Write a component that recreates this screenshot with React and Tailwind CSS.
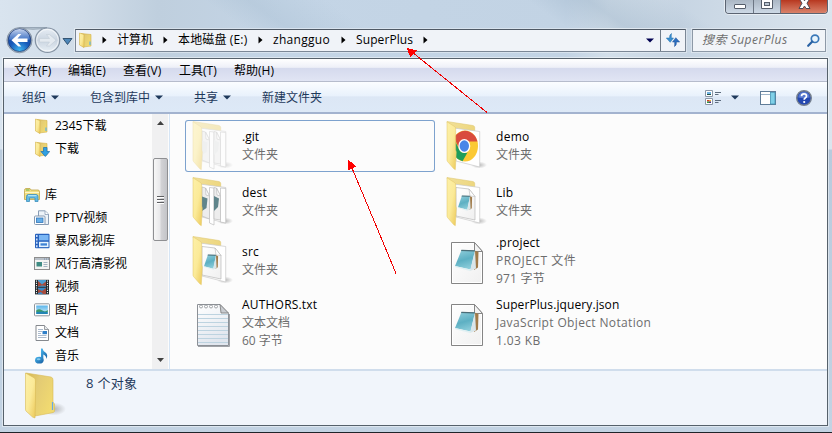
import React from "react";

const Down = ({ className = "", color = "#1e395b" }) => (
  <svg width="8" height="5" viewBox="0 0 8 5" className={"shrink-0 " + className}>
    <path d="M0 0.5h8L4 4.5z" fill={color} />
  </svg>
);

const Crumb = ({ children, className = "" }) => (
  <div className={"flex h-full shrink-0 items-center justify-between whitespace-nowrap " + className}>
    <span>{children}</span>
    <svg width="5" height="8" viewBox="0 0 5 8" className="shrink-0">
      <path d="M0.5 0.5L4.5 4L0.5 7.5z" fill="#000" />
    </svg>
  </div>
);

const Defs = () => (
  <svg width="0" height="0" className="absolute">
    <defs>
      <linearGradient id="flap" x1="0" y1="0" x2="1" y2="1">
        <stop offset="0" stopColor="#fdf0a8" />
        <stop offset="0.5" stopColor="#fbea98" />
        <stop offset="1" stopColor="#ecc95a" />
      </linearGradient>
      <linearGradient id="back" x1="0" y1="0" x2="1" y2="1">
        <stop offset="0" stopColor="#f1e09a" />
        <stop offset="1" stopColor="#ead06c" />
      </linearGradient>
      <linearGradient id="backDeep" x1="0" y1="0" x2="1" y2="0.6">
        <stop offset="0" stopColor="#d5b851" />
        <stop offset="0.4" stopColor="#e3cb74" />
        <stop offset="1" stopColor="#f1da70" />
      </linearGradient>
      <linearGradient id="paper" x1="0" y1="0" x2="1" y2="1">
        <stop offset="0" stopColor="#ffffff" />
        <stop offset="1" stopColor="#f0f0f0" />
      </linearGradient>
      <linearGradient id="pad" x1="0.3" y1="0" x2="0.6" y2="1">
        <stop offset="0" stopColor="#8ccbd9" />
        <stop offset="0.5" stopColor="#5db0c3" />
        <stop offset="1" stopColor="#8fcfdc" />
      </linearGradient>
      <linearGradient id="note" x1="0" y1="0" x2="0.4" y2="1">
        <stop offset="0" stopColor="#ffffff" />
        <stop offset="1" stopColor="#e1e6ee" />
      </linearGradient>
      <linearGradient id="sky" x1="0" y1="0" x2="0" y2="1">
        <stop offset="0" stopColor="#5ab4ea" />
        <stop offset="1" stopColor="#d7f1fa" />
      </linearGradient>
      <linearGradient id="tune" x1="0" y1="0" x2="1" y2="1">
        <stop offset="0" stopColor="#4cb8ee" />
        <stop offset="1" stopColor="#12599e" />
      </linearGradient>
      <radialGradient id="orb" cx="0.5" cy="0.95" r="0.9">
        <stop offset="0" stopColor="#3fb6f0" />
        <stop offset="0.5" stopColor="#1859b8" />
        <stop offset="1" stopColor="#16429a" />
      </radialGradient>
      <linearGradient id="orbShine" x1="0" y1="0" x2="0" y2="1">
        <stop offset="0" stopColor="#dfe9fa" stopOpacity="0.9" />
        <stop offset="1" stopColor="#6b97dc" stopOpacity="0.5" />
      </linearGradient>
      <linearGradient id="orbOff" x1="0" y1="0" x2="0" y2="1">
        <stop offset="0" stopColor="#e8eef5" />
        <stop offset="0.5" stopColor="#c9d4e0" />
        <stop offset="1" stopColor="#e9f0f6" />
      </linearGradient>
      <radialGradient id="shade">
        <stop offset="0" stopColor="#777" stopOpacity="0.5" />
        <stop offset="1" stopColor="#777" stopOpacity="0" />
      </radialGradient>
    </defs>
  </svg>
);

/* Notepad block that sits on documents */
const Pad = () => (
  <g>
    <path d="M19.5 1.5L23.5 3L23 18.5L19 21z" fill="#a07a48" />
    <path d="M6.5 1L20 1.5L15.5 20.5L0 17z" fill="url(#pad)" />
    <path d="M20 1.5L21 19.5L15 22L15.5 20.5z" fill="#d9e6ea" />
    <path d="M0 17L15.5 20.5L15 22L0.5 18.2z" fill="#e0f0f3" />
    <path d="M6.5 0.8L20 1.2L19.6 2.6L6 2z" fill="#4a6c76" />
  </g>
);

const FolderIcon = ({ inner, faded }) => (
  <svg width="57" height="52" viewBox="0 0 57 52" className="shrink-0" opacity={faded ? 0.5 : 1}>
    <ellipse cx="40" cy="45" rx="8" ry="3.5" fill="url(#shade)" />
    <path d="M8 1.5L34 5.5Q35.700 6 35.700 7.500V30L16 38z" fill="url(#back)" stroke="#dcc56a" strokeWidth="0.5" />
    <path d="M14.5 8L40.7 11.500V47L17 41z" fill="#fff" stroke="#c8c8c8" strokeWidth="0.7" />
    {inner === "papers" && (
      <g stroke="#bdbdbd" strokeWidth="0.7">
        <path d="M17 11L20.500 12L24.500 20V43L17 40z" fill="#ededed" />
        <path d="M17 20.500L22.500 22.500L21.500 32L17 35z" fill={faded ? "#e3e5e6" : "#60858b"} stroke="none" />
        <path d="M20.500 12L21 19L24.500 20z" fill="#fff" />
        <path d="M24.500 11.500L29 12V49L24.500 47z" fill="#fff" />
        <path d="M29 11.500L31.500 12L35.500 20V44L29 43z" fill="#ededed" />
        <path d="M29 20L34 22.500L33 31L29 35z" fill={faded ? "#e3e5e6" : "#60858b"} stroke="none" />
        <path d="M31.500 12L32 19L35.500 20z" fill="#fff" />
        <path d="M35.500 12L40.7 12.500V47L35.500 46z" fill="#fff" />
      </g>
    )}
    {inner === "page" && (
      <g>
        <path d="M17 11.500L30 13L36 20.500V44L17 40z" fill="url(#paper)" stroke="#b9b9b9" strokeWidth="0.7" />
        <path d="M30 13L31 20L36 20.500z" fill="#fff" stroke="#b9b9b9" strokeWidth="0.6" />
        <g transform="translate(19 19) scale(.6 .72)"><Pad /></g>
      </g>
    )}
    {inner === "chrome" && (
      <g>
        <ellipse cx="26" cy="26" rx="13" ry="15.5" fill="#fbc934" />
        <path d="M15 17.5Q22 8 31 12Q37 15 38.5 21.5H26Q21 22 20 28z" fill="#d94b3d" />
        <path d="M14.5 18L21 31Q24 34 28.5 32.5L23.5 41.3Q13 38 13 26Q13 21 14.5 18z" fill="#1f9d5b" />
        <ellipse cx="25.3" cy="26" rx="6" ry="7" fill="#fff" />
        <ellipse cx="25.3" cy="26" rx="4.7" ry="5.7" fill="#4a86e8" />
      </g>
    )}
    <path d="M8 1.8L15.5 6.500Q16.700 7.500 16.700 9V30L17.300 32L16.300 49.700L14.500 48.500L8.5 41.500Q8 41 8 40z" fill="url(#flap)" stroke="#e2c767" strokeWidth="0.5" />
  </svg>
);

const FileIcon = () => (
  <svg width="57" height="52" viewBox="0 0 57 52" className="shrink-0">
    <path d="M12.5 7.5H35.5L43.5 16.5V48.5H12.5z" fill="url(#paper)" stroke="#858585" />
    <path d="M13.5 8.5H35V17H42.5V47.5H13.5z" fill="none" stroke="#fff" />
    <path d="M35.5 7.5V16.5H43.5z" fill="#f3f3f3" stroke="#858585" />
    <g transform="translate(16 14)"><Pad /></g>
  </svg>
);

const TextIcon = () => (
  <svg width="57" height="52" viewBox="0 0 57 52" className="shrink-0">
    <path d="M12.5 7.5H35L43.5 16.5V48.5H12.5z" fill="url(#note)" stroke="#8c9096" />
    <path d="M44.5 17V49.5H13" fill="none" stroke="#a0a3a8" />
    {[18, 22, 26, 30, 34, 38, 42, 46].map((y) => (
      <path key={y} d={`M13 ${y - 0.5}H43`} stroke="#bdd3e0" />
    ))}
    {[15, 20, 25, 30].map((x) => (
      <circle key={x} cx={x + 1} cy="9.5" r="1.5" fill="#fff" stroke="#8c8f94" strokeWidth="0.8" />
    ))}
    <path d="M35 7.5L36 16H43.5z" fill="#c9ccd1" stroke="#777" strokeWidth="0.8" />
  </svg>
);

const Item = ({ icon, name, nameClass = "", lines, selected }) => (
  <div className={"flex items-center " + (selected ? "rounded-[3px] shadow-[inset_0_0_0_1px_#7da2ce]" : "")}>
    {icon}
    <div className="flex flex-col whitespace-nowrap text-[12px] leading-[18px] text-[#6d6d6d]">
      <span className={"text-black " + nameClass}>{name}</span>
      {lines.map(([l, c]) => (
        <span key={l} className={c}>{l}</span>
      ))}
    </div>
  </div>
);

const SmallFolder = () => (
  <>
    <path d="M3 1.5L13 2.5V14L5 15z" fill="url(#backDeep)" stroke="#d3b24a" strokeWidth="0.6" />
    <path d="M1.5 1L6 2.5V15.5L1.5 13z" fill="url(#flap)" stroke="#d3b24a" strokeWidth="0.6" />
  </>
);

const glyphs = {
  folder: (
    <>
      <SmallFolder />
      <path d="M12 9.5V13" stroke="#5ab2e6" strokeWidth="1.2" />
    </>
  ),
  download: (
    <>
      <SmallFolder />
      <path d="M9.5 6.5h3.5v4h2.7l-4.4 5-4.4-5h2.6z" fill="#30a0e2" stroke="#1b6eae" strokeWidth="0.7" />
    </>
  ),
  library: (
    <>
      <path d="M0.5 3.5Q0.5 1.5 2 1.5H6L7 3H14Q15.5 3 15.5 5V12.5H0.5z" fill="#f1de82" stroke="#bfa548" strokeWidth="0.8" />
      <path d="M2 3H5.5" stroke="#66b44c" strokeWidth="1" />
      <path d="M1 5.5H15" stroke="#fff7c7" />
      <path d="M2.5 14.5V9.5Q2.5 7.5 4.5 7.5H12Q14 7.5 14 9.5V14.5H11V11H5.5V14.5z" fill="#62b9e2" stroke="#3c8fbc" strokeWidth="0.8" />
      <path d="M4 8.7H12.5" stroke="#c4edfa" />
    </>
  ),
  pptv: (
    <>
      <path d="M4.5 0.8H11L14.5 4V14.5H4.5z" fill="#edf3f9" stroke="#8a9db5" />
      <path d="M11 1V4.5H14.5" fill="#fff" stroke="#8a9db5" strokeWidth="0.8" />
      <rect x="0.5" y="6" width="10.5" height="8.5" rx="1" fill="#fff" stroke="#8598b0" />
      <rect x="2.5" y="8" width="6.5" height="4.5" fill="#66aee8" stroke="#3175b9" strokeWidth="0.8" />
    </>
  ),
  storm: (
    <>
      <rect x="1" y="0.8" width="14.5" height="14.5" rx="1" fill="#2862bd" />
      <path d="M2.8 2V15" stroke="#dcebff" strokeWidth="1.4" strokeDasharray="2 1.4" />
      <rect x="5" y="2" width="9.5" height="5.3" fill="#7ab6f4" />
      <rect x="5" y="8.8" width="9.5" height="5.3" fill="#e6f3ff" />
      <path d="M6.5 10.3H13v2.3H6.5z" fill="#3f83d5" />
    </>
  ),
  funshion: (
    <>
      <rect x="0.5" y="1.5" width="15" height="12" fill="#f4f4f2" stroke="#8d8d8d" />
      <path d="M1 3H15" stroke="#b9c0c8" strokeWidth="2" />
      <path d="M10 3H15" stroke="#758aa5" strokeWidth="1" strokeDasharray="1 1" />
      <path d="M2.5 6H8V10.5H2.5z" fill="#408c83" />
      <path d="M9.5 6.5H13.5M9.5 8.5H13.5M9.5 10.5H13.5" stroke="#8fa3b4" strokeWidth="0.8" />
    </>
  ),
  video: (
    <>
      <rect x="1" y="0.8" width="14" height="14.6" fill="#22292e" />
      <rect x="4" y="1" width="8" height="6.7" fill="#4d9fd4" />
      <rect x="4" y="8.7" width="8" height="6.5" fill="#3c8ac6" />
      <path d="M4 2L8 5.5L12 2.5V7L8 6.5L4 7.5zM4 10L8 12L12 9V15H9L7 13L4 14z" fill="#a64b3c" />
      <path d="M2.5 1.5V15M13.5 1.5V15" stroke="#e9eef0" strokeWidth="1.1" strokeDasharray="1.2 1.1" />
    </>
  ),
  picture: (
    <>
      <rect x="0.5" y="1.8" width="15" height="12" rx="0.8" fill="#fff" stroke="#8e959c" />
      <rect x="2.2" y="3.5" width="11.6" height="8.6" fill="url(#sky)" />
      <path d="M2.2 8.5Q5 6 8 8.3T13.8 8V10H2.2z" fill="#3e9a6a" />
      <path d="M2.2 10Q8 8.8 13.8 10V12.1H2.2z" fill="#2386b5" />
    </>
  ),
  doc: (
    <>
      <path d="M2 0.5H10.5L14.5 4.5V15.5H2z" fill="#fff" stroke="#85898e" />
      <path d="M10.5 0.5V4.5H14.5" fill="#e6e9ec" stroke="#85898e" strokeWidth="0.8" />
      <path d="M4 4.5H9M4 6.5H8M4 8.5H7M4 10.5H12.5M4 12.5H12.5" stroke="#97aac0" strokeWidth="0.8" />
      <rect x="8.5" y="6" width="4.5" height="3.2" fill="#2f7fc8" />
    </>
  ),
  music: (
    <>
      <path d="M7 0.5H8.5Q8.8 2.8 11.5 4.5Q14.5 7 12.3 11Q12.5 7.5 9.3 6.5V12H7z" fill="url(#tune)" />
      <ellipse cx="5.3" cy="12.2" rx="4.3" ry="3.4" fill="url(#tune)" />
      <ellipse cx="4.7" cy="11.2" rx="1.8" ry="1" fill="#a6e0fa" opacity="0.7" />
    </>
  ),
};

const TreeRow = ({ icon, label, root }) => (
  <div className={"flex h-[23px] shrink-0 items-center gap-[5px] " + (root ? "pl-[20px]" : "pl-[30px]")}>
    <svg width="16" height="16" viewBox="0 0 16 16" className="shrink-0">
      {glyphs[icon]}
    </svg>
    <span className="whitespace-nowrap">{label}</span>
  </div>
);

const tree = [
  ["pptv", "PPTV视频"],
  ["storm", "暴风影视库"],
  ["funshion", "风行高清影视"],
  ["video", "视频"],
  ["picture", "图片"],
  ["doc", "文档"],
  ["music", "音乐"],
];

const menus = [
  ["文件(F)", "w-[54px]"],
  ["编辑(E)", "w-[55px]"],
  ["查看(V)", "w-[56px]"],
  ["工具(T)", "w-[55px]"],
  ["帮助(H)", "w-[60px]"],
];

export default function App() {
  return (
    <div className="relative flex h-[433px] w-[832px] flex-col overflow-hidden bg-[linear-gradient(180deg,transparent_0px,transparent_149px,#b9cbdd_150px,#c3d3e3_433px),linear-gradient(90deg,#d9e4ef_0%,#d0dce8_10%,#bfcfde_19%,#c4d5e6_34%,#c2d3e4_68%,#d3dfea_73%,#c7d5e3_82%,#dbe5ee_100%)] font-['Open_Sans','Noto_Sans_CJK_SC',sans-serif] text-[12px] text-black">
      <Defs />
      {/* Title bar */}
      <div className="flex h-[28px] shrink-0 items-start justify-end bg-[linear-gradient(35deg,transparent_0%,transparent_28%,rgba(165,188,208,0.35)_33%,transparent_42%,transparent_65%,rgba(150,174,196,0.4)_72%,transparent_82%)] pr-[4px]">
        <div className="flex h-[14px] w-[103px] overflow-hidden rounded-b-[4px] border border-t-0 border-[#5b6472] shadow-[0_0_0_1px_rgba(255,255,255,0.5)]">
          <div className="flex w-[28px] items-start justify-center border-r border-[#6c7684] bg-linear-to-b from-[#abb7c4] to-[#cdd9e6] pt-[4px]">
            <div className="h-[5px] w-[12px] rounded-[1px] border border-[#555e6b] bg-white" />
          </div>
          <div className="flex w-[27px] items-start justify-center border-r border-[#6c7684] bg-linear-to-b from-[#abb7c4] to-[#cdd9e6]">
            <svg width="12" height="9" viewBox="0 0 12 9">
              <path d="M0.5 -2V8.5H11.5V-2z" fill="#fff" stroke="#555e6b" />
              <rect x="3.5" y="2.5" width="5" height="3" fill="#b8c4d0" stroke="#555e6b" />
            </svg>
          </div>
          <div className="flex flex-1 items-start justify-center bg-linear-to-b from-[#b7371f] to-[#d9826a]">
            <svg width="13" height="10" viewBox="0 0 13 10">
              <path d="M1 -1.5H5L6.5 0.8L8 -1.5H12L9 3.2L12 8.5H8L6.5 6L5 8.5H1L4 3.2z" fill="#fff" stroke="#4f4a55" />
            </svg>
          </div>
        </div>
      </div>

      {/* Navigation row */}
      <div className="flex h-[24px] shrink-0 items-center">
        <svg width="75" height="28" viewBox="0 0 75 28" className="shrink-0">
          <path d="M19 1.5H47Q33 5 19 1.5z" fill="#b8c6d4" stroke="#8c9aaa" strokeWidth="0.8" />
          <circle cx="19.5" cy="14.2" r="12.6" fill="#a8b6c6" stroke="#7e8c9d" strokeWidth="0.8" />
          <circle cx="19.5" cy="14.2" r="11.3" fill="url(#orb)" stroke="#1f3a70" strokeWidth="0.7" />
          <path d="M9 13.5A10.5 10.5 0 0 1 30 13.5Q20 15.5 9 13.5z" fill="url(#orbShine)" />
          <path d="M11.5 14.2L18.3 7.9H21.3L17.5 12.5H27.5V16H17.5L21.3 20.5H18.3z" fill="#fff" />
          <circle cx="47.5" cy="14.2" r="12.2" fill="url(#orbOff)" stroke="#8593a3" strokeWidth="1.2" />
          <circle cx="47.5" cy="14.2" r="10.8" fill="none" stroke="#fff" strokeOpacity="0.6" />
          <path d="M56 14.2L49.5 8.5H46.5L49.5 12.5H39.5V16H49.5L46.5 20H49.5z" fill="#e4eaf0" stroke="#c3cdd6" strokeWidth="0.6" />
          <path d="M63 12.5H72L67.5 18.5z" fill="#4d86b8" stroke="#1d3d5c" strokeWidth="0.8" />
        </svg>
        <div className="flex h-[23px] w-[611px] shrink-0 items-center border border-[#7b8796] border-t-[#4f5965] bg-[#f0f3f8] shadow-[0_0_0_1px_rgba(255,255,255,0.35)]">
          <svg width="16" height="16" viewBox="0 0 16 16" className="ml-[2px] shrink-0">
            {glyphs.folder}
          </svg>
          <Crumb className="w-[13px]"><span className="inline-block w-[6px]" /></Crumb>
          <Crumb className="w-[61px] pl-[10px]">计算机</Crumb>
          <Crumb className="w-[95px] pl-[10px]"><span className="tracking-[0.15px]">本地磁盘 (E:)</span></Crumb>
          <Crumb className="w-[83px] pl-[10px]"><span className="tracking-[0.3px]">zhangguo</span></Crumb>
          <Crumb className="w-[82px] pl-[10px]"><span className="tracking-[0.1px]">SuperPlus</span></Crumb>
          <div className="flex-1" />
          <Down color="#000050" className="mr-[6px]" />
          <div className="flex h-full w-[25px] items-center justify-center border-l border-[#6f7a88]">
            <svg width="14" height="14" viewBox="0 0 14 14">
              <path d="M5.5 0.5Q3.3 1.5 3.6 5H0.3L4.2 9.3L7.5 5H5.3Q5.2 2 5.5 0.5z" fill="#3b8fd0" stroke="#1f6caa" strokeWidth="0.5" />
              <path d="M8.5 13.5Q10.7 12.5 10.4 9H13.7L9.8 4.7L6.5 9H8.7Q8.8 12 8.5 13.5z" fill="#2c6fc0" stroke="#1d4f96" strokeWidth="0.5" />
            </svg>
          </div>
        </div>
        <div className="ml-[6px] flex h-[23px] w-[134px] shrink-0 items-center justify-between border border-[#8d99a7] border-t-[#59636f] bg-[#f1f4f8] pr-[5px] pl-[9px] shadow-[0_0_0_1px_rgba(255,255,255,0.35)]">
          <span className="whitespace-nowrap tracking-[0.5px] text-[#6e6e6e] italic">搜索 SuperPlus</span>
          <svg width="13" height="13" viewBox="0 0 13 13">
            <circle cx="8" cy="4.8" r="3.7" fill="#e8f4fc" stroke="#3a78b8" strokeWidth="1.7" />
            <path d="M5.3 7.6L1.2 11.8" stroke="#2a62a4" strokeWidth="2.2" strokeLinecap="round" />
          </svg>
        </div>
      </div>

      {/* Window body */}
      <div className="mt-[6px] mr-[4px] ml-[3px] flex h-[368px] shrink-0 flex-col border border-[#56616b] bg-[#fcfcfc] shadow-[0_0_0_1px_rgba(255,255,255,0.45)]">
        <div className="flex h-[23px] shrink-0 items-center border-b border-[#b6bccc] bg-[linear-gradient(180deg,#fff_0%,#eef0f8_38%,#d5daed_42%,#e1e5f4_100%)] pt-[2px] pl-[10px]">
          {menus.map(([m, w]) => (
            <span key={m} className={"shrink-0 whitespace-nowrap " + w}>{m}</span>
          ))}
        </div>
        <div className="flex h-[32px] shrink-0 items-center border-b-2 border-[#a3b3cf] bg-[linear-gradient(180deg,#fbfdff_0%,#e9f2fc_45%,#dce7f5_50%,#dde9f7_100%)] pt-[1px] pl-[18px] text-[#1e395b]">
          <div className="flex w-[68px] items-center gap-[5px]">组织<Down /></div>
          <div className="flex w-[104px] items-center gap-[5px]">包含到库中<Down /></div>
          <div className="flex w-[68px] items-center gap-[5px]">共享<Down /></div>
          <div>新建文件夹</div>
          <div className="flex-1" />
          <svg width="16" height="16" viewBox="0 0 16 16" className="shrink-0">
            <path d="M0.5 0.5h7v6h-7zM0.5 8.5h7v6h-7z" fill="#fff" stroke="#8b97a6" />
            <path d="M2 2h4v3H2z" fill="#6fb2e2" />
            <path d="M2 4h4v1H2z" fill="#1f5244" />
            <path d="M2 10h2v1.5H2z" fill="#d83a2a" />
            <path d="M4 10h2v1.5H4z" fill="#e6b22a" />
            <path d="M2 11.5h2V13H2z" fill="#2f9d42" />
            <path d="M4 11.5h2V13H4z" fill="#4b2a86" />
            <path d="M10 2.5H16M10 4.5H13.5M10 10.5H16M10 12.5H13.5" stroke="#5c6b7d" />
          </svg>
          <Down className="ml-[10px]" />
          <svg width="16" height="14" viewBox="0 0 16 14" className="ml-[21px] shrink-0">
            <rect x="0.5" y="0.5" width="15" height="13" fill="#fff" stroke="#5f7c98" />
            <path d="M1 3.5H10" stroke="#9db4c9" />
            <rect x="10.5" y="1.5" width="4.5" height="11.5" fill="#7fd0e8" stroke="#4593b3" strokeWidth="0.8" />
          </svg>
          <svg width="16" height="16" viewBox="0 0 16 16" className="mr-[15px] ml-[20px] shrink-0">
            <circle cx="8" cy="8" r="7.3" fill="#2347b0" stroke="#76808f" strokeWidth="1.4" />
            <path d="M2.3 7.5A5.7 5.7 0 0 1 13.7 7.5Q8 9 2.3 7.5z" fill="#7b9be4" opacity="0.6" />
            <path d="M5.5 6.2Q5.5 3.8 8 3.8Q10.5 3.8 10.5 5.9Q10.5 7.2 9.2 7.9Q8.2 8.5 8.2 9.7" fill="none" stroke="#fff" strokeWidth="1.7" />
            <circle cx="8.2" cy="12" r="1.1" fill="#fff" />
          </svg>
        </div>

        <div className="flex h-[255px] shrink-0">
          {/* Navigation tree */}
          <div className="flex w-[148px] shrink-0 flex-col overflow-hidden">
            <TreeRow icon="folder" label="2345下载" />
            <TreeRow icon="download" label="下载" />
            <div className="h-[23px] shrink-0" />
            <TreeRow icon="library" label="库" root />
            {tree.map(([i, l]) => (
              <TreeRow key={i} icon={i} label={l} />
            ))}
          </div>
          <div className="flex w-[16px] shrink-0 flex-col items-center bg-[#f0f0f1]">
            <svg width="7" height="4" viewBox="0 0 7 4" className="mt-[7px]">
              <path d="M3.5 0L7 4H0z" fill="#404040" />
            </svg>
            <div className="mt-[33px] flex h-[83px] w-[15px] flex-col items-center justify-center gap-[1px] rounded-[2px] border border-[#8e8f92] bg-[linear-gradient(90deg,#f7f7f7_0%,#e9e9eb_45%,#d2d2d5_55%,#c3c4c8_100%)]">
              <div className="h-[2px] w-[7px] border-t border-[#5d5e61] bg-white" />
              <div className="h-[2px] w-[7px] border-t border-[#5d5e61] bg-white" />
              <div className="h-[2px] w-[7px] border-t border-[#5d5e61] bg-white" />
            </div>
            <div className="flex-1" />
            <svg width="7" height="4" viewBox="0 0 7 4" className="mb-[7px]">
              <path d="M0 0H7L3.5 4z" fill="#404040" />
            </svg>
          </div>
          <div className="w-[2px] shrink-0 border-r border-[#d6e5f5]" />
          {/* File tiles */}
          <div className="grid grid-cols-[250px_250px] grid-rows-[52px_52px_58px_58px] content-start gap-[4px] pt-[6px] pl-[15px]">
            <Item selected icon={<FolderIcon inner="papers" faded />} name=".git" lines={[["文件夹", ""]]} />
            <Item icon={<FolderIcon inner="chrome" />} name="demo" nameClass="tracking-[0.3px]" lines={[["文件夹", ""]]} />
            <Item icon={<FolderIcon inner="papers" />} name="dest" nameClass="tracking-[0.2px]" lines={[["文件夹", ""]]} />
            <Item icon={<FolderIcon inner="page" />} name="Lib" nameClass="tracking-[0.2px]" lines={[["文件夹", ""]]} />
            <Item icon={<FolderIcon inner="page" />} name="src" nameClass="tracking-[0.2px]" lines={[["文件夹", ""]]} />
            <Item icon={<FileIcon />} name=".project" nameClass="tracking-[0.2px]" lines={[["PROJECT 文件", "tracking-[0.5px]"], ["971 字节", "tracking-[0.2px]"]]} />
            <Item icon={<TextIcon />} name="AUTHORS.txt" nameClass="tracking-[0.2px]" lines={[["文本文档", ""], ["60 字节", ""]]} />
            <Item icon={<FileIcon />} name="SuperPlus.jquery.json" nameClass="tracking-[0.1px]" lines={[["JavaScript Object Notation", "tracking-[0.35px]"], ["1.03 KB", "tracking-[0.4px]"]]} />
          </div>
        </div>

        {/* Details pane */}
        <div className="flex flex-1 items-start border-t-2 border-[#d0ddec] bg-[#f1f5fb]">
          <svg width="82" height="50" viewBox="0 0 82 50" className="shrink-0">
            <ellipse cx="50" cy="38" rx="12" ry="6.5" fill="url(#shade)" />
            <path d="M22 2L47 6Q49 6.5 49 9V31L50.500 33V40.500Q50 41.500 47 42L31 45z" fill="url(#backDeep)" stroke="#d9bb55" strokeWidth="0.6" />
            <path d="M48.5 31V39" stroke="#64a8e8" strokeWidth="1.2" />
            <path d="M21.5 2L30.5 7Q31.5 8 31.5 10V27L31 47L28.500 46L22 40Q21.5 39.5 21.5 38z" fill="url(#flap)" stroke="#d9bb55" strokeWidth="0.6" />
          </svg>
          <span className="pt-[3px] text-[13px] leading-[18px] tracking-[0.3px] text-[#1e395b]">8 个对象</span>
        </div>
      </div>
      <div className="flex-1" />
      <div className="h-[1px] shrink-0 bg-[#20242a]" />

      {/* Red annotation arrows */}
      <svg width="832" height="433" viewBox="0 0 832 433" className="pointer-events-none absolute top-0 left-0" shapeRendering="crispEdges">
        <path d="M412 52L487 112.5M352 168L396 273.5" stroke="#f00000" fill="none" />
        <path d="M406.5 48L417 50.5L410.5 57.5zM348 159.5L356.5 166.5L348 170.5z" fill="#ff0000" />
      </svg>
    </div>
  );
}
